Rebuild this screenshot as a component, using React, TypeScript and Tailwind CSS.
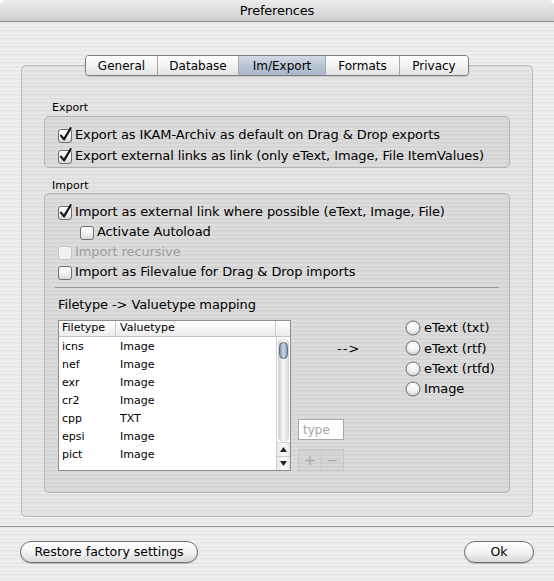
import React from "react";

function CheckBox({ checked = false, disabled = false }: { checked?: boolean; disabled?: boolean }) {
  return (
    <svg width="16" height="16" viewBox="0 0 16 16" className="shrink-0">
      <defs>
        <linearGradient id="cbFill" x1="0" y1="0" x2="0" y2="1">
          <stop offset="0" stopColor="#ffffff" />
          <stop offset="0.5" stopColor="#f2f2f2" />
          <stop offset="1" stopColor="#d9d9d9" />
        </linearGradient>
      </defs>
      <rect
        x="1.5"
        y="2.5"
        width="13"
        height="13"
        rx="2.5"
        fill={disabled ? "#f1f1f1" : "url(#cbFill)"}
        stroke={disabled ? "#c4c4c4" : "#6f6f6f"}
      />
      {checked && (
        <path
          d="M4 8.6 L7 12.4 L13.6 1.2"
          stroke="#151515"
          strokeWidth="2.2"
          fill="none"
          strokeLinecap="round"
          strokeLinejoin="round"
        />
      )}
    </svg>
  );
}

function Radio() {
  return (
    <svg width="16" height="16" viewBox="0 0 16 16" className="shrink-0">
      <defs>
        <radialGradient id="rdFill" cx="0.5" cy="0.3" r="0.7">
          <stop offset="0" stopColor="#ffffff" />
          <stop offset="0.6" stopColor="#f0f0f0" />
          <stop offset="1" stopColor="#c9c9c9" />
        </radialGradient>
      </defs>
      <circle cx="8" cy="8" r="7" fill="url(#rdFill)" stroke="#6e6e6e" />
    </svg>
  );
}

const rows: [string, string][] = [
  ["icns", "Image"],
  ["nef", "Image"],
  ["exr", "Image"],
  ["cr2", "Image"],
  ["cpp", "TXT"],
  ["epsi", "Image"],
  ["pict", "Image"],
];

const tabs = ["General", "Database", "Im/Export", "Formats", "Privacy"];
const tabWidths = ["w-[71px]", "w-[81px]", "w-[87px]", "w-[74px]", "w-[69px]"];

export default function App() {
  return (
    <div className="w-[554px] h-[581px] overflow-hidden bg-white font-['DejaVu_Sans',sans-serif] text-black">
      <div className="w-[554px] h-[581px] rounded-t-[6px] overflow-hidden bg-[repeating-linear-gradient(180deg,#efefef_0px,#efefef_2px,#e8e8e8_2px,#e8e8e8_4px)] flex flex-col">
        {/* Title bar */}
        <div className="h-[22px] shrink-0 bg-gradient-to-b from-[#ececec] to-[#cfcfcf] border-b border-[#8c8c8c] flex items-center justify-center">
          <span className="text-[13px] leading-none tracking-[-0.2px]">Preferences</span>
        </div>

        {/* Body */}
        <div className="h-[504px] shrink-0 pt-[33px] px-[21px] flex flex-col">
          {/* Tabs */}
          <div className="relative z-10 flex justify-center h-[21px]">
            <div className="flex h-[21px] rounded-[4px] border border-[#7d7d7d] overflow-hidden shadow-[0_1px_1px_rgba(0,0,0,0.15)]">
              {tabs.map((t, i) => (
                <div
                  key={t}
                  className={
                    (i === 2
                      ? "bg-gradient-to-b from-[#d3dbe5] via-[#b9c6d5] to-[#a7b6c8] "
                      : "bg-gradient-to-b from-[#ffffff] via-[#f4f4f4] to-[#e2e2e2] ") +
                    (i > 0 ? "border-l border-[#a8a8a8] " : "") +
                    tabWidths[i] +
                    " flex items-center justify-center text-[12px] leading-none"
                  }
                >
                  {t}
                </div>
              ))}
            </div>
          </div>

          {/* Tab box */}
          <div className="-mt-[11px] h-[452px] rounded-[5px] border border-[#b9b9b9] bg-black/[0.035] pt-[35px] px-[22px]">
            <div className="text-[11px] leading-[14px] ml-[8px]">Export</div>
            <div className="mt-[1px] h-[52px] rounded-[5px] border border-[#b3b3b3] bg-black/[0.045] pt-[7px] pl-[12px] text-[13px] tracking-[-0.1px]">
              <div className="h-[21px] flex items-center gap-[2px]">
                <CheckBox checked />
                <span>Export as IKAM-Archiv as default on Drag &amp; Drop exports</span>
              </div>
              <div className="h-[21px] flex items-center gap-[2px]">
                <CheckBox checked />
                <span>Export external links as link (only eText, Image, File ItemValues)</span>
              </div>
            </div>

            <div className="mt-[11px] text-[11px] leading-[14px] ml-[8px]">Import</div>
            <div className="h-[300px] rounded-[5px] border border-[#b3b3b3] bg-black/[0.045] pt-[8px] text-[13px] tracking-[-0.1px]">
              <div className="pl-[12px]">
                <div className="h-[20px] flex items-center gap-[2px]">
                  <CheckBox checked />
                  <span>Import as external link where possible (eText, Image, File)</span>
                </div>
                <div className="h-[20px] flex items-center gap-[2px] pl-[22px]">
                  <CheckBox />
                  <span>Activate Autoload</span>
                </div>
                <div className="h-[20px] flex items-center gap-[2px] text-[#9d9d9d]">
                  <CheckBox disabled />
                  <span>Import recursive</span>
                </div>
                <div className="h-[20px] flex items-center gap-[2px]">
                  <CheckBox />
                  <span>Import as Filevalue for Drag &amp; Drop imports</span>
                </div>
              </div>
              <div className="mt-[5px] mx-[10px] h-px bg-[#9a9a9a]" />
              <div className="mt-[10px] pl-[13px] leading-[14px]">Filetype -&gt; Valuetype mapping</div>

              <div className="mt-[8px] pl-[13px] flex items-start tracking-normal">
                {/* Table */}
                <div className="w-[233px] h-[151px] border border-[#8e8e8e] bg-white flex flex-col text-[11px]">
                  <div className="h-[16px] shrink-0 flex border-b border-[#c3c3c3] bg-gradient-to-b from-[#ffffff] to-[#ececec]">
                    <div className="w-[57px] pl-[3px] flex items-center border-r border-[#cdcdcd]">Filetype</div>
                    <div className="w-[160px] pl-[4px] flex items-center border-r border-[#cdcdcd]">Valuetype</div>
                    <div className="flex-1" />
                  </div>
                  <div className="flex-1 flex min-h-0">
                    <div className="flex-1 pt-px">
                      {rows.map(([a, b]) => (
                        <div key={a} className="h-[18px] flex items-center">
                          <div className="w-[57px] pl-[3px]">{a}</div>
                          <div className="pl-[4px]">{b}</div>
                        </div>
                      ))}
                    </div>
                    {/* Scrollbar */}
                    <div className="w-[14px] flex flex-col border-l border-[#cfcfcf] bg-white">
                      <div className="flex-1 mx-[1px] mt-[1px] rounded-b-[7px] rounded-t-[7px] bg-gradient-to-r from-[#cfcfcf] via-[#f8f8f8] to-[#d6d6d6] relative">
                        <div className="absolute left-[1px] right-[1px] top-[4px] h-[17px] rounded-[6px] border border-[#5d6e82] bg-gradient-to-r from-[#7f93aa] via-[#c9d6e4] to-[#8a9db3]" />
                      </div>
                      <div className="h-[14px] flex items-center justify-center border-t border-[#cfcfcf] bg-gradient-to-r from-[#e6e6e6] via-[#fbfbfb] to-[#e6e6e6]">
                        <svg width="7" height="5" viewBox="0 0 7 5"><path d="M3.5 0 L7 5 L0 5 Z" fill="#222" /></svg>
                      </div>
                      <div className="h-[14px] flex items-center justify-center border-t border-[#cfcfcf] bg-gradient-to-r from-[#e6e6e6] via-[#fbfbfb] to-[#e6e6e6]">
                        <svg width="7" height="5" viewBox="0 0 7 5"><path d="M0 0 L7 0 L3.5 5 Z" fill="#222" /></svg>
                      </div>
                    </div>
                  </div>
                </div>

                {/* Middle column */}
                <div className="ml-[7px] w-[100px] h-[151px] flex flex-col">
                  <div className="mt-[22px] ml-[39px] text-[13px] leading-[14px] tracking-[1px]">--&gt;</div>
                  <div className="mt-auto w-[46px] h-[21px] border border-[#a8a8a8] bg-white flex items-center pl-[4px] text-[12px] text-[#a6a6a6]">
                    type
                  </div>
                  <div className="mt-[9px] w-[46px] h-[22px] border border-[#c5c5c5] flex bg-black/[0.02]">
                    <div className="flex-1 flex items-center justify-center border-r border-[#c5c5c5] text-[14px] text-[#a8a8a8]">+</div>
                    <div className="flex-1 flex items-center justify-center text-[14px] text-[#a8a8a8]">−</div>
                  </div>
                </div>

                {/* Radios */}
                <div className="ml-[7px] -mt-[2px] flex flex-col text-[13px] tracking-[-0.1px]">
                  {["eText (txt)", "eText (rtf)", "eText (rtfd)", "Image"].map((r) => (
                    <div key={r} className="h-[20.3px] flex items-center gap-[3px]">
                      <Radio />
                      <span>{r}</span>
                    </div>
                  ))}
                </div>
              </div>
            </div>
          </div>
        </div>

        {/* Footer */}
        <div className="flex-1 border-t border-[#959595] px-[20px] pt-[14px] flex justify-between items-start">
          <button className="w-[178px] h-[22px] rounded-full border border-[#707070] bg-gradient-to-b from-[#ffffff] via-[#f3f3f3] to-[#d8d8d8] shadow-[0_1px_1px_rgba(0,0,0,0.2)] text-[12.5px] flex items-center justify-center">
            Restore factory settings
          </button>
          <button className="w-[70px] h-[22px] rounded-full border border-[#707070] bg-gradient-to-b from-[#ffffff] via-[#f3f3f3] to-[#d8d8d8] shadow-[0_1px_1px_rgba(0,0,0,0.2)] text-[12.5px] flex items-center justify-center">
            Ok
          </button>
        </div>
      </div>
    </div>
  );
}
